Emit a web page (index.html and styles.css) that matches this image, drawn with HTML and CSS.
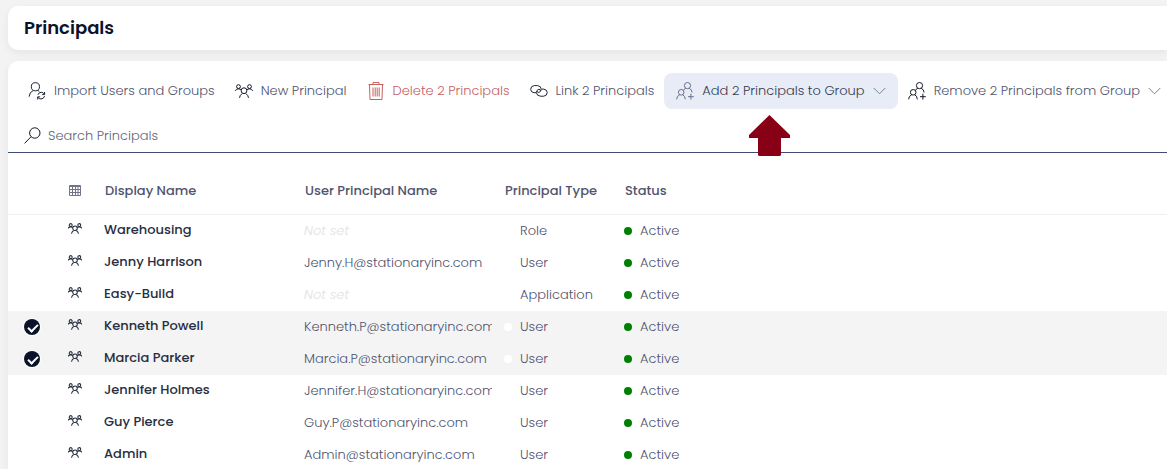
FILE: index.html
```html
<!DOCTYPE html>
<html lang="en">
<head>
<meta charset="utf-8">
<title>Principals</title>
<link rel="stylesheet" href="styles.css">
</head>
<body>
<svg class="sprite" aria-hidden="true">
  <symbol id="people" viewBox="0 0 18 14">
    <circle cx="3.5" cy="2.6" r="1.9"/><circle cx="14.5" cy="2.6" r="1.9"/>
    <circle cx="9" cy="6.7" r="2.9"/>
    <path d="M.6 7V6.200Q1.200 4.900 3.500 4.900 5.300 4.900 6.200 5.800M17.400 7V6.200Q16.800 4.900 14.500 4.900 12.700 4.900 11.800 5.800M4.500 13.800Q4.800 11.200 7.200 9.500M13.500 13.800Q13.200 11.200 10.800 9.500"/>
  </symbol>
  <symbol id="person-sync" viewBox="0 0 18 19">
    <circle cx="7.300" cy="5" r="4.300"/>
    <path d="M.7 15.500Q1 10.500 5 9M9.600 9Q11 9.500 11.500 10.200M10 13.500Q10.800 10.900 13.500 10.900 15.800 10.900 16.700 12.800M17 10.500V13.300H14.500M17 14.900Q16 17.900 13.200 17.900 11 17.900 10 16.200M9.700 18.500V15.700H12.300"/>
  </symbol>
  <symbol id="people-add" viewBox="0 0 18 18">
    <circle cx="11.500" cy="3.600" r="3.100"/><circle cx="5.200" cy="10.300" r="2.800"/>
    <path d="M.6 17.300Q.8 13.800 3.700 12.800M6.700 12.800Q9 13.600 9.300 17.300M9.800 6.300Q7.700 7 7.500 8.600M13.200 6.300Q15.800 7.200 16.100 10.500M14.900 11.800V17.600M12 14.700H17.800"/>
  </symbol>
  <symbol id="trash" viewBox="0 0 16 18">
    <path d="M.5 2.500H15.500M5 2.500V.5H11V2.500M1.500 2.500 2 17.500H14L14.500 2.500M5 5.500V14.500M7.200 5.500V14.500M9.200 5.500V14.500M11.200 5.500V14.500"/>
  </symbol>
  <symbol id="link" viewBox="0 0 19 13">
    <path d="M6.500 8.300H4.200Q.7 7.900.7 4.600.9 1.100 4.500.8H8Q11.700 1.200 11.900 4.600 11.700 7.400 9.300 8.100 7.800 8.200 7.800 6.800M12.500 4.500H14.500Q18 4.900 18.200 8.100 18 11.600 14.500 12H11Q7.200 11.600 6.700 8.200 6.900 5.300 9.300 4.700 11 4.600 10.900 6.200"/>
  </symbol>
  <symbol id="search" viewBox="0 0 17 17">
    <circle cx="10.800" cy="6" r="5.200"/><path d="M7 9.800.6 16.400"/>
  </symbol>
  <symbol id="chevron" viewBox="0 0 14 8"><path d="M.7.7 7 7 13.300.7"/></symbol>
  <symbol id="grid" viewBox="0 0 12 11">
    <path d="M.5.500H11.500V10.500H.500ZM.5 1.500H11.500M.5 4.500H11.500M.5 7.500H11.500M3.500 1V10.500M6.500 1V10.500M9 1V10.500"/>
  </symbol>
</svg>

<header class="title-card"><h1>Principals</h1></header>

<main class="panel">
  <div class="toolbar">
    <button class="tool" type="button"><svg class="icon"><use href="#person-sync"/></svg>Import Users and Groups</button>
    <button class="tool" type="button"><svg class="icon icon-people"><use href="#people"/></svg>New Principal</button>
    <button class="tool danger" type="button"><svg class="icon"><use href="#trash"/></svg>Delete 2 Principals</button>
    <button class="tool" type="button"><svg class="icon"><use href="#link"/></svg>Link 2 Principals</button>
    <div class="tool-anchor">
      <button class="tool active" type="button"><svg class="icon"><use href="#people-add"/></svg>Add 2 Principals to Group<svg class="chevron"><use href="#chevron"/></svg></button>
      <svg class="pointer" viewBox="0 0 41 41" aria-hidden="true"><path d="M20.500 0 41 20V23H32V40L31 41H10L9 40V23H0V20Z"/></svg>
    </div>
    <button class="tool" type="button"><svg class="icon"><use href="#people-add"/></svg>Remove 2 Principals from Group<svg class="chevron"><use href="#chevron"/></svg></button>
  </div>

  <label class="search">
    <svg class="search-icon"><use href="#search"/></svg>
    <input type="text" placeholder="Search Principals" aria-label="Search Principals">
  </label>

  <table class="grid">
    <colgroup><col class="c-check"><col class="c-icon"><col class="c-name"><col class="c-upn"><col class="c-type"><col></colgroup>
    <thead>
      <tr><th></th><th><svg class="grid-icon"><use href="#grid"/></svg></th><th>Display Name</th><th>User Principal Name</th><th>Principal Type</th><th>Status</th></tr>
    </thead>
    <tbody>
      <tr><td><input type="checkbox" aria-label="Warehousing"></td><td><svg class="row-icon"><use href="#people"/></svg></td><td class="name">Warehousing</td><td class="unset">Not set</td><td><span class="dot"></span>Role</td><td><span class="dot on"></span>Active</td></tr>
      <tr><td><input type="checkbox" aria-label="Jenny Harrison"></td><td><svg class="row-icon"><use href="#people"/></svg></td><td class="name">Jenny Harrison</td><td><div class="clip">Jenny.H@stationaryinc.com</div></td><td><span class="dot"></span>User</td><td><span class="dot on"></span>Active</td></tr>
      <tr><td><input type="checkbox" aria-label="Easy-Build"></td><td><svg class="row-icon"><use href="#people"/></svg></td><td class="name">Easy-Build</td><td class="unset">Not set</td><td><span class="dot"></span>Application</td><td><span class="dot on"></span>Active</td></tr>
      <tr class="selected"><td><input type="checkbox" checked aria-label="Kenneth Powell"></td><td><svg class="row-icon"><use href="#people"/></svg></td><td class="name">Kenneth Powell</td><td><div class="clip">Kenneth.P@stationaryinc.com</div></td><td><span class="dot"></span>User</td><td><span class="dot on"></span>Active</td></tr>
      <tr class="selected"><td><input type="checkbox" checked aria-label="Marcia Parker"></td><td><svg class="row-icon"><use href="#people"/></svg></td><td class="name">Marcia Parker</td><td><div class="clip">Marcia.P@stationaryinc.com</div></td><td><span class="dot"></span>User</td><td><span class="dot on"></span>Active</td></tr>
      <tr><td><input type="checkbox" aria-label="Jennifer Holmes"></td><td><svg class="row-icon"><use href="#people"/></svg></td><td class="name">Jennifer Holmes</td><td><div class="clip">Jennifer.H@stationaryinc.com</div></td><td><span class="dot"></span>User</td><td><span class="dot on"></span>Active</td></tr>
      <tr><td><input type="checkbox" aria-label="Guy Pierce"></td><td><svg class="row-icon"><use href="#people"/></svg></td><td class="name">Guy Pierce</td><td><div class="clip">Guy.P@stationaryinc.com</div></td><td><span class="dot"></span>User</td><td><span class="dot on"></span>Active</td></tr>
      <tr><td><input type="checkbox" aria-label="Admin"></td><td><svg class="row-icon"><use href="#people"/></svg></td><td class="name">Admin</td><td><div class="clip">Admin@stationaryinc.com</div></td><td><span class="dot"></span>User</td><td><span class="dot on"></span>Active</td></tr>
    </tbody>
  </table>
</main>
</body>
</html>
```
FILE: styles.css
```css
* { box-sizing: border-box; }
body {
  margin: 0;
  padding: 6px 0 0 8px;
  height: 100vh;
  overflow: hidden;
  background: #f3f3f3;
  color: #50546f;
  font: 300 13px/20px Poppins, Inter, sans-serif;
}
svg { fill: none; stroke: currentColor; flex: none; }
.sprite { display: none; }

.title-card, .panel {
  background: #fff;
  border-radius: 10px 0 0 10px;
  box-shadow: 0 3px 8px rgba(0, 0, 0, .06);
}
.title-card { padding: 8px 16px; margin-bottom: 11px; }
h1 {
  margin: 0;
  color: #0b132b;
  font-size: 18px;
  line-height: 28px;
  font-weight: 600;
}
.panel { padding-top: 12px; border-bottom-left-radius: 0; }

.toolbar { display: flex; padding-left: 10px; }
.tool {
  display: flex;
  align-items: center;
  gap: 8px;
  height: 36px;
  padding: 0 10px;
  border: 0;
  border-radius: 8px;
  background: none;
  color: inherit;
  font: inherit;
  white-space: nowrap;
}
.icon { width: 18px; height: 18px; color: #101828; }
.icon-people { height: 14px; }
.danger, .danger .icon { color: #c4625f; }
.active { padding: 0 12px; background: #e8ecf7; color: #343b50; }
.active .icon { color: #66718a; }
.chevron { width: 13px; height: 8px; color: #6b7894; }
.tool-anchor { position: relative; }
.pointer {
  position: absolute;
  top: 42px;
  left: 85px;
  width: 41px;
  height: 41px;
  fill: #880015;
  stroke: none;
}

.search {
  display: flex;
  align-items: center;
  gap: 7px;
  height: 44px;
  padding: 10px 16px 0;
  border-bottom: 1px solid #3f4b75;
}
.search-icon { width: 17px; height: 17px; color: #101828; }
.search input {
  flex: 1;
  padding: 0;
  border: 0;
  outline: 0;
  background: none;
  color: inherit;
  font: inherit;
}
.search input::placeholder { color: #626477; opacity: 1; }

.grid { width: 100%; table-layout: fixed; border-spacing: 0; }
.c-check { width: 49px; }
.c-icon { width: 40px; }
.c-name, .c-upn { width: 200px; }
.c-type { width: 120px; }
th {
  height: 62px;
  padding: 14px 8px 0;
  border-bottom: 1px solid #f0f0f0;
  text-align: left;
  font-weight: 500;
}
td { height: 32px; padding: 0 5px 0 7px; white-space: nowrap; }
th:nth-child(2) { padding-left: 12px; }
td:nth-child(2) { padding-left: 11px; }
td:first-child { padding: 0 0 0 16px; }
.selected { background: #f4f4f4; }
.name { padding-bottom: 2px; color: #272e3f; font-weight: 500; }
.unset { color: #e2e2e2; font-style: italic; }
.clip { overflow: hidden; }
.grid-icon { display: block; width: 12px; height: 11px; color: #70748a; }
.row-icon { display: block; width: 14px; height: 11px; margin-bottom: 6px; color: #272e3f; stroke-width: 1.4; }
.dot {
  display: inline-block;
  width: 8px;
  height: 8px;
  margin-right: 8px;
  border-radius: 50%;
  background: #fff;
}
.on { background: #008000; }
td input {
  display: block;
  appearance: none;
  width: 16px;
  height: 16px;
  margin: 0;
  border-radius: 50%;
}
td input:checked { background: #0b132b; box-shadow: 0 0 0 1px #fff; }
td input:checked::before {
  content: "";
  display: block;
  width: 8px;
  height: 4px;
  margin: 5px 0 0 4px;
  border: solid #fff;
  border-width: 0 0 2px 2px;
  transform: rotate(-45deg);
}
```
